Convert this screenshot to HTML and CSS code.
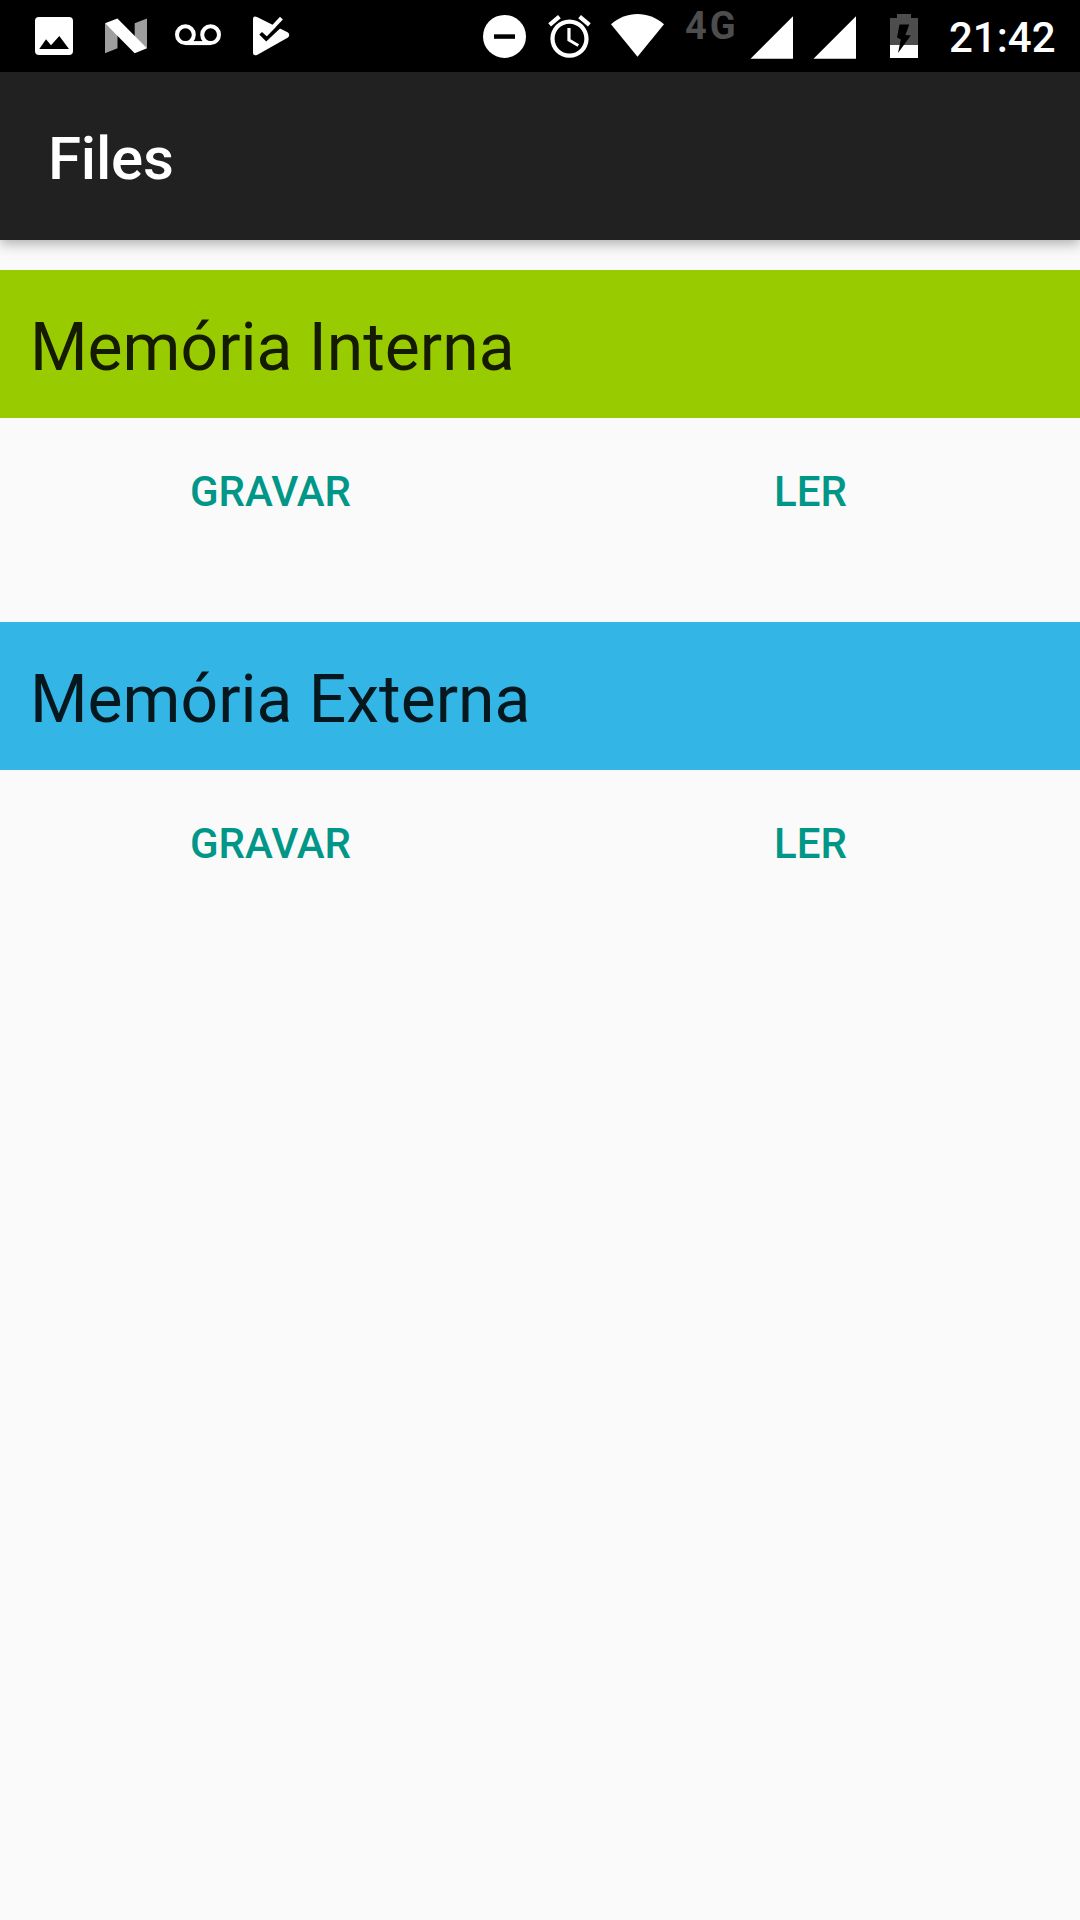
FILE: index.html
```html
<!DOCTYPE html>
<html lang="pt">
<head>
<meta charset="utf-8">
<title>Files</title>
<link rel="stylesheet" href="styles.css">
</head>
<body>
<div class="status-bar">
  <svg class="notification" viewBox="0 0 72 72"><rect x="17" y="17" width="38" height="38" rx="4"/><path class="cutout" d="M21.3 49 28 39.3l5 6L41.3 36 51 49z"/></svg>
  <svg class="notification" viewBox="0 0 72 72"><path class="shade" d="M15 23.3v30l12.5-5V34zM44.7 23.3 57 18.5v30L44.7 38z"/><path d="M15 23.3 27.4 18.6 57 48.3l-12.3 5z"/></svg>
  <svg class="notification" viewBox="0 0 72 72"><g class="outline"><circle cx="23.4" cy="34.7" r="8.4"/><circle cx="48.6" cy="34.7" r="8.4"/><path d="M23.4 43.1h25.2"/></g></svg>
  <svg class="notification" viewBox="0 0 72 72"><path d="M19 19q0-3.500 4-2L54 32.500q2.500 2.500 0 5L23 55q-4 1-4-2z"/><path class="cutout" d="M25.300 34.500 28 32l4.700 4.300L49 19.500V26l-3.500 3L32.200 41.500z"/><path d="M32.700 31 46 16.700l2.900 2.800L32.700 36.300z"/></svg>
  <div class="system">
    <svg width="60" height="72" viewBox="478 0 60 72"><circle cx="504.500" cy="36.400" r="21.500"/><path class="cutout" d="M494 34.300h21v4.500h-21z"/></svg>
    <svg width="64" height="72" viewBox="538 0 64 72"><path transform="translate(544 11) scale(2.125)" d="M22 5.720l-4.600-3.860-1.290 1.530 4.600 3.860L22 5.720zM7.880 3.390L6.600 1.860 2 5.710l1.290 1.530 4.590-3.850zM12.500 8H11v6l4.750 2.850.75-1.230-4-2.370V8zM12 4c-4.970 0-9 4.030-9 9s4.020 9 9 9c4.970 0 9-4.030 9-9s-4.030-9-9-9zm0 16c-3.870 0-7-3.130-7-7s3.130-7 7-7 7 3.130 7 7-3.130 7-7 7z"/></svg>
    <svg width="72" height="72" viewBox="602 0 72 72"><path d="M611 24.200C619 17.500 628 14 637.500 14s18.500 3.500 26.500 10.200L637.500 56.700z"/></svg>
    <span class="network">4G</span>
    <svg width="62" height="72" viewBox="742 0 62 72"><path d="M793 16.300v42.500h-42.500z"/></svg>
    <svg width="62" height="72" viewBox="804 0 62 72"><path d="M856 16.300v42.500h-42.500z"/></svg>
    <svg width="76" height="72" viewBox="866 0 76 72"><path class="drained" d="M890 18h7v-4h14v4h7v27h-28z"/><path d="M890 45h28v13h-28z"/><path class="cutout" d="M899.500 24.500h9.700L905.500 35l5.300.5L898 53l2.800-13.500-3.800-2z"/></svg>
    <span class="clock">21:42</span>
  </div>
</div>
<header class="app-bar"><h1>Files</h1></header>
<main>
  <section>
    <h2 class="internal">Memória Interna</h2>
    <div class="actions"><button>GRAVAR</button><button>LER</button></div>
  </section>
  <section>
    <h2 class="external">Memória Externa</h2>
    <div class="actions"><button>GRAVAR</button><button>LER</button></div>
  </section>
</main>
</body>
</html>
```
FILE: styles.css
```css
* { box-sizing: border-box; }
body {
  margin: 0;
  min-height: 1920px;
  background: #fafafa;
  font-family: Roboto, sans-serif;
}
h1, h2 { margin: 0; }
.status-bar {
  display: flex;
  height: 72px;
  padding-left: 18px;
  background: #000;
  color: #fff;
}
svg { display: block; flex: none; fill: #fff; }
.notification { width: 72px; height: 72px; }
.cutout { fill: #000; }
.shade { fill: #9e9e9e; }
.drained { fill: #4d4d4d; }
.outline { fill: none; stroke: #fff; stroke-width: 4; }
.system { display: flex; margin-left: 172px; }
.network {
  width: 68px;
  padding-left: 11px;
  color: #4d4d4d;
  font-size: 38px;
  font-weight: 700;
  line-height: 53px;
  letter-spacing: 3px;
}
.clock {
  padding-left: 7px;
  font-size: 42px;
  font-weight: 500;
  line-height: 76px;
}
.app-bar {
  display: flex;
  align-items: center;
  height: 168px;
  padding: 4px 48px 0;
  background: #212121;
  color: #fff;
  box-shadow: 0 4px 12px rgba(0, 0, 0, .3);
}
.app-bar h1 { font-size: 60px; font-weight: 500; letter-spacing: -.2px; }
main {
  display: flex;
  flex-direction: column;
  gap: 60px;
  padding-top: 30px;
}
h2 {
  padding: 34px 30px 26px;
  color: rgba(0, 0, 0, .87);
  font-size: 66px;
  font-weight: 400;
  line-height: 88px;
}
.internal { background: #9c0; }
.external { background: #33b5e5; }
.actions { display: grid; grid-template-columns: 1fr 1fr; }
button {
  height: 144px;
  padding: 2px 0 0 1px;
  border: 0;
  background: none;
  color: #009688;
  font: 500 42px Roboto, sans-serif;
}
```
